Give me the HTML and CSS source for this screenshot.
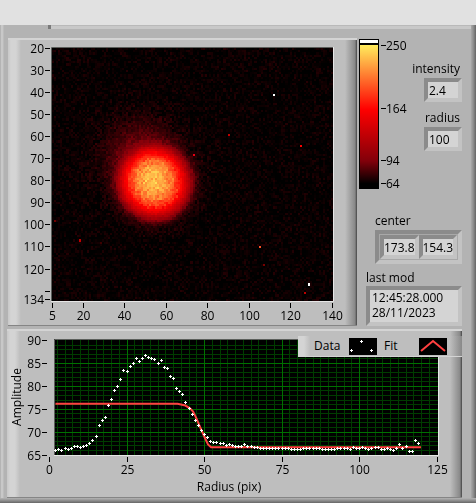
FILE: index.html
```html
<!DOCTYPE html>
<html lang="en">
   <head>
      <meta charset="UTF-8">
      <meta name="viewport" content="width=device-width, initial-scale=1">
      <title>Beam profile</title>
      <link rel="stylesheet" href="styles.css">
   </head>
   <body>
      <main class="panel">
         <div class="tab-edge"></div>
         <div class="top-row">
            <section class="graph image-graph">
               <svg id="image" viewBox="0 0 349 288" role="img" aria-label="Camera image">
                  <path d="M43.5 263V9.5H325" stroke="#5c5f5c" fill="none"/>
                  <path d="M43 263.5H325.5V9" stroke="#e6e6e6" fill="none"/>
                  <foreignObject x="44" y="10" width="281" height="253">
                     <canvas id="heat" class="heat" width="136" height="115"></canvas>
                  </foreignObject>
               </svg>
            </section>
            <aside class="side">
               <div class="side-top">
                  <svg class="ramp" width="52" height="151" viewBox="0 0 52 151">
                     <defs>
                        <linearGradient id="hot" x1="0" y1="0" x2="0" y2="1">
                           <stop offset="0" stop-color="#ffec5c"/>
                           <stop offset=".45" stop-color="#ff0000"/>
                           <stop offset=".81" stop-color="#82000a"/>
                           <stop offset=".97" stop-color="#000"/>
                        </linearGradient>
                     </defs>
                     <rect x="1" y="1" width="20" height="150" fill="#000"/>
                     <rect x="2" y="2" width="18" height="3" fill="#fff"/>
                     <rect x="2" y="7" width="18" height="143" fill="url(#hot)"/>
                     <path d="M23 7.5h5M23 70.5h5M23 122.5h5M23 145.5h5" stroke="#000"/>
                     <text x="28" y="12">250</text>
                     <text x="28" y="75">164</text>
                     <text x="28" y="127">94</text>
                     <text x="28" y="150">64</text>
                  </svg>
                  <div class="numbers">
                     <div class="field">
                        <label for="intensity">intensity</label>
                        <input id="intensity" class="box small" type="text" value="2.4" readonly>
                     </div>
                     <div class="field">
                        <label for="radius">radius</label>
                        <input id="radius" class="box small" type="text" value="100" readonly>
                     </div>
                  </div>
               </div>
               <div class="field center">
                  <label for="cx">center</label>
                  <div class="cluster">
                     <input id="cx" class="box" type="text" value="173.86" readonly>
                     <input id="cy" class="box" type="text" value="154.34" aria-label="center y" readonly>
                  </div>
               </div>
               <div class="field modified">
                  <label for="mod">last mod</label>
                  <textarea id="mod" class="box" rows="2" readonly>12:45:28.000
28/11/2023</textarea>
               </div>
            </aside>
         </div>
         <section class="graph plot-graph">
            <svg id="plot" viewBox="0 0 455 169" role="img" aria-label="Amplitude against radius"></svg>
            <div class="legend">
               <span>Data</span>
               <svg width="28" height="17" viewBox="0 0 28 17">
                  <rect width="28" height="17" fill="#000"/>
                  <path d="M1 12.5h3M2.5 11v3M11 3.5h3M12.5 2v3M21 12.5h3M22.5 11v3" stroke="#fff"/>
               </svg>
               <span class="fit">Fit</span>
               <svg width="28" height="17" viewBox="0 0 28 17">
                  <rect width="28" height="17" fill="#000"/>
                  <path d="M2 13L14 3L26 13" stroke="#ff4040" stroke-width="2" fill="none"/>
               </svg>
            </div>
         </section>
      </main>
      <script src="graphs.js"></script>
   </body>
</html>
```
FILE: styles.css
```css
* { box-sizing: border-box; }
body { margin: 0; padding-top: 25px; background: #e1e1e1; color: #000; font: 12px/16px "Open Sans", "Noto Sans", sans-serif; }
svg { display: block; }
svg text { font: 12px "Open Sans", "Noto Sans", sans-serif; fill: #000; }

.panel {
   padding: 0 5px 5px 7px;
   background:
      linear-gradient(to bottom, #b4b4b4, #8f8f8f 50%, #666) bottom / 100% 5px no-repeat,
      linear-gradient(to right, #aaa, #8c8c8c 50%, #666) right / 5px 100% no-repeat,
      linear-gradient(to right, #b4b4b4 1px, #c8c8c8 1px 3px, #b0b0b0 4px) left / 4px 100% no-repeat,
      #b3b3b3;
}
.tab-edge { height: 4px; margin: 0 0 9px 41px; border-left: 3px solid #7a7a7a; background: linear-gradient(#b9b9b9 1px, #c8c8c8 1px); }

.top-row { display: flex; margin-left: 1px; }
.graph {
   background:
      linear-gradient(#d4d4d4, #d4d4d4) top / 100% 2px no-repeat,
      linear-gradient(#858585, #858585) bottom / 100% 1px no-repeat,
      linear-gradient(to right, #bebebe, #888 10px, #444 12px) right / 12px 100% no-repeat,
      linear-gradient(to right, #c8c8c8, #d4d4d4 3px 8px, #bebebe 13px) left / 13px 100% no-repeat,
      #bebebe;
}
.graph > svg { width: 100%; height: auto; }
.image-graph { flex: 1; min-width: 0; }
.heat { display: block; width: 281px; height: 253px; image-rendering: pixelated; }

.side { flex: none; width: 114px; padding: 0 9px 0 1px; }
.side-top { display: flex; justify-content: space-between; }
.numbers { display: flex; flex-direction: column; gap: 8px; padding-top: 23px; }
.field { display: flex; flex-direction: column; gap: 1px; }
.numbers .field { align-items: flex-end; }
.numbers label { padding-right: 2px; }
.box {
   display: block; margin: 0; padding: 0 1px; border: 4px solid; border-color: #8b8b8b #c3c3c3 #c3c3c3 #8b8b8b;
   border-radius: 0; outline: 0; background: #d4d4d4; color: #000; font: inherit; resize: none; overflow: hidden;
}
.small { width: 38px; height: 24px; }
.center { margin: 24px 0 6px 17px; }
.cluster { display: flex; padding: 1px; border: 4px solid; border-color: #8b8b8b #c3c3c3 #c3c3c3 #8b8b8b; background: #a8a8a8; }
.cluster .box { flex: 1; min-width: 0; height: 24px; padding: 0; }
.modified { margin-left: 8px; gap: 0; }
.modified .box { width: 100%; height: 40px; padding: 0 2px; line-height: 15px; }

.plot-graph { position: relative; margin: 3px 9px 0 0; }
.legend {
   position: absolute; top: 7px; right: 0; display: grid; grid-template-columns: 35px 28px 42px 28px; align-items: center;
   height: 21px; padding: 0 15px 0 16px; border-bottom: 1px solid #d4d4d4;
   background: linear-gradient(to right, #d4d4d4 6px, #bebebe 12px calc(100% - 12px), #888);
}
.fit { padding-left: 7px; }
```
FILE: graphs.js
```js
var NS = 'http://www.w3.org/2000/svg';

function add(parent, tag, attrs, text) {
   var el = document.createElementNS(NS, tag);
   for (var k in attrs) { el.setAttribute(k, attrs[k]); }
   if (text !== undefined) { el.textContent = text; }
   parent.appendChild(el);
   return el;
}

/* axes: value -> position inside the svg, ticks sit on half pixels */
function axisX(svg, values, pos, y) {
   values.forEach(function(v) {
      var x = Math.floor(pos(v)) + 0.5;
      add(svg, 'path', { d: 'M' + x + ' ' + y + 'v5', stroke: '#000' });
      add(svg, 'text', { x: x, y: y + 17, 'text-anchor': 'middle' }, v);
   });
}
function axisY(svg, values, pos, x, hidden) {
   values.forEach(function(v) {
      var y = Math.floor(pos(v)) + 0.5;
      add(svg, 'path', { d: 'M' + x + ' ' + y + 'h-5', stroke: '#000' });
      if (v !== hidden) { add(svg, 'text', { x: x - 6, y: y + 4, 'text-anchor': 'end' }, v); }
   });
}

/* piecewise linear lookup in [[x, a, b, ...], ...] */
function lookup(table, x) {
   if (x <= table[0][0]) { return table[0].slice(1); }
   for (var i = 1; i < table.length; i++) {
      if (x <= table[i][0]) {
         var p = table[i - 1], q = table[i], t = (x - p[0]) / (q[0] - p[0]);
         return q.slice(1).map(function(n, j) { return p[j + 1] + (n - p[j + 1]) * t; });
      }
   }
   return table[table.length - 1].slice(1);
}

var seed = 7;
function rnd() {
   seed = (seed * 16807) % 2147483647;
   return seed / 2147483647;
}

var colours = [[64, 0, 0, 0], [94, 130, 0, 10], [164, 255, 0, 0], [250, 255, 236, 92]];
var profile = [[0, 218], [10, 212], [16, 200], [22, 180], [27, 158], [31, 136], [35, 112], [38, 92], [41, 77], [46, 68], [60, 64]];
/* column, row, red, green, blue */
var hot = [
   [107, 21, 255, 255, 255], [120, 44, 255, 0, 0], [85, 39, 190, 0, 0], [68, 48, 230, 0, 20],
   [100, 90, 255, 80, 40], [102, 98, 120, 0, 0], [124, 107, 255, 255, 255], [122, 111, 190, 0, 0],
   [13, 87, 190, 0, 0], [1, 78, 110, 0, 0], [23, 88, 60, 0, 0]
];

function drawHeat() {
   var cv = document.getElementById('heat'), ctx = cv.getContext('2d');
   var img = ctx.createImageData(cv.width, cv.height);
   function put(c, r, rgb) {
      var i = (r * cv.width + c) * 4;
      img.data[i] = rgb[0]; img.data[i + 1] = rgb[1]; img.data[i + 2] = rgb[2]; img.data[i + 3] = 255;
   }
   for (var r = 0; r < cv.height; r++) {
      for (var c = 0; c < cv.width; c++) {
         var x = c * 2.07, y = r * 2.2;
         var d = Math.sqrt(Math.pow(x - 102, 2) + Math.pow(y - 134, 2));
         var v = lookup(profile, d)[0];
         /* faint tail above and to the left of the spot */
         var hx = x - 87, hy = y - 107;
         v += 24 * Math.exp(-(hx * hx + hy * hy) / 1200) + (rnd() + rnd() - 0.85) * (d < 26 ? 18 : 8);
         put(c, r, lookup(colours, v));
      }
   }
   hot.forEach(function(h) { put(h[0], h[1], h.slice(2)); });
   ctx.putImageData(img, 0, 0);
}

function drawImageAxes() {
   var svg = document.getElementById('image');
   axisX(svg, [5, 20, 40, 60, 80, 100, 120, 140], function(v) { return 44 + (v - 5) * 2.075; }, 265);
   axisY(svg, [20, 30, 40, 50, 60, 70, 80, 90, 100, 110, 120, 130, 134], function(v) { return 10 + (v - 20) * 2.21; }, 42, 130);
}

/* amplitude samples, radius 2 and up */
var samples = [
   66, 66.2, 66, 66.4, 66.2, 66.4, 66.8, 66.8, 66.6, 66.8, 67, 67.5, 68.1, 69, 71.4, 72.5, 73.1, 75.8, 77.1, 79.1, 79.9, 81.5,
   83.4, 83.2, 84.3, 85, 86.1, 85.4, 86.1, 86.7, 86.3, 86.1, 85.8, 85, 85.6, 84.1, 83.9, 82.1, 81.7, 79.5, 78.8, 78.2, 76.4,
   75.1, 73.8, 72.5, 71.4, 70.3, 69.4, 68.8, 67.9, 67.7, 67.7, 67.5, 67.5, 67, 67.2, 67, 66.8, 66.8, 66.8, 67.2, 66.8, 66.8,
   66.6, 66.6, 66.4, 66.4, 66.4, 66.4, 66.4, 66.4, 66.4, 66.4, 66.4, 66.4, 66.2, 66.2, 66.2, 66.2, 66.4, 66.4, 66.4, 66.4, 66.4,
   66.4, 66.2, 66.2, 66.2, 66.2, 66.2, 66.4, 66.4, 66.4, 66.4, 66.2, 66.6, 66.4, 66.4, 66.6, 66.4, 66.2, 66.4, 66.6, 66.6, 66.2,
   66.2, 66.4, 66.2, 66, 66.4, 67.2, 66.4, 66.8, 65.7, 65.7, 68.1, 67.5
];
var fit = [[1.6, 76.2], [41, 76.2], [43.5, 75.8], [45, 75.2], [46, 74.5], [47, 73.1], [48.2, 71.2], [49.5, 69.2], [50.8, 67.3], [51.8, 66.7], [119.5, 66.7]];

function drawPlot() {
   var svg = document.getElementById('plot');
   function px(v) { return 42.5 + v * 3.1; }
   function py(v) { return 11.5 + (90 - v) * 4.58; }
   var minor = '', major = '', dots = '', i;
   add(svg, 'rect', { x: 47, y: 10, width: 384, height: 116, fill: '#000' });
   for (i = 1; i < 50; i++) {
      var gx = 'M' + (Math.floor(px(i * 2.5)) + 0.5) + ' 11v115';
      if (i % 10) { minor += gx; } else { major += gx; }
   }
   for (i = 66; i < 90; i++) {
      var gy = 'M48 ' + (Math.floor(py(i)) + 0.5) + 'h383';
      if (i % 5) { minor += gy; } else { major += gy; }
   }
   add(svg, 'path', { d: minor, stroke: '#003c00' });
   add(svg, 'path', { d: major, stroke: '#007000' });
   add(svg, 'path', { d: 'M47.5 126V10.5H431', stroke: '#5c5f5c', fill: 'none' });
   add(svg, 'path', { d: 'M47 126.5H431.5V10', stroke: '#e6e6e6', fill: 'none' });
   add(svg, 'polyline', { points: fit.map(function(p) { return (px(p[0]) + 1) + ',' + py(p[1]); }).join(' '), stroke: '#ff4040', 'stroke-width': 2, fill: 'none' });
   samples.forEach(function(v, n) {
      var x = Math.floor(px(n + 2)), y = Math.floor(py(v));
      dots += 'M' + (x - 1) + ' ' + (y + 0.5) + 'h3M' + (x + 0.5) + ' ' + (y - 1) + 'v3';
   });
   add(svg, 'path', { d: dots, stroke: '#fff' });
   axisX(svg, [0, 25, 50, 75, 100, 125], px, 128);
   axisY(svg, [90, 85, 80, 75, 70, 65], py, 40);
   add(svg, 'text', { x: 222, y: 162, 'text-anchor': 'middle' }, 'Radius (pix)');
   add(svg, 'text', { transform: 'translate(14 68) rotate(-90)', 'text-anchor': 'middle' }, 'Amplitude');
}

drawHeat();
drawImageAxes();
drawPlot();
```
